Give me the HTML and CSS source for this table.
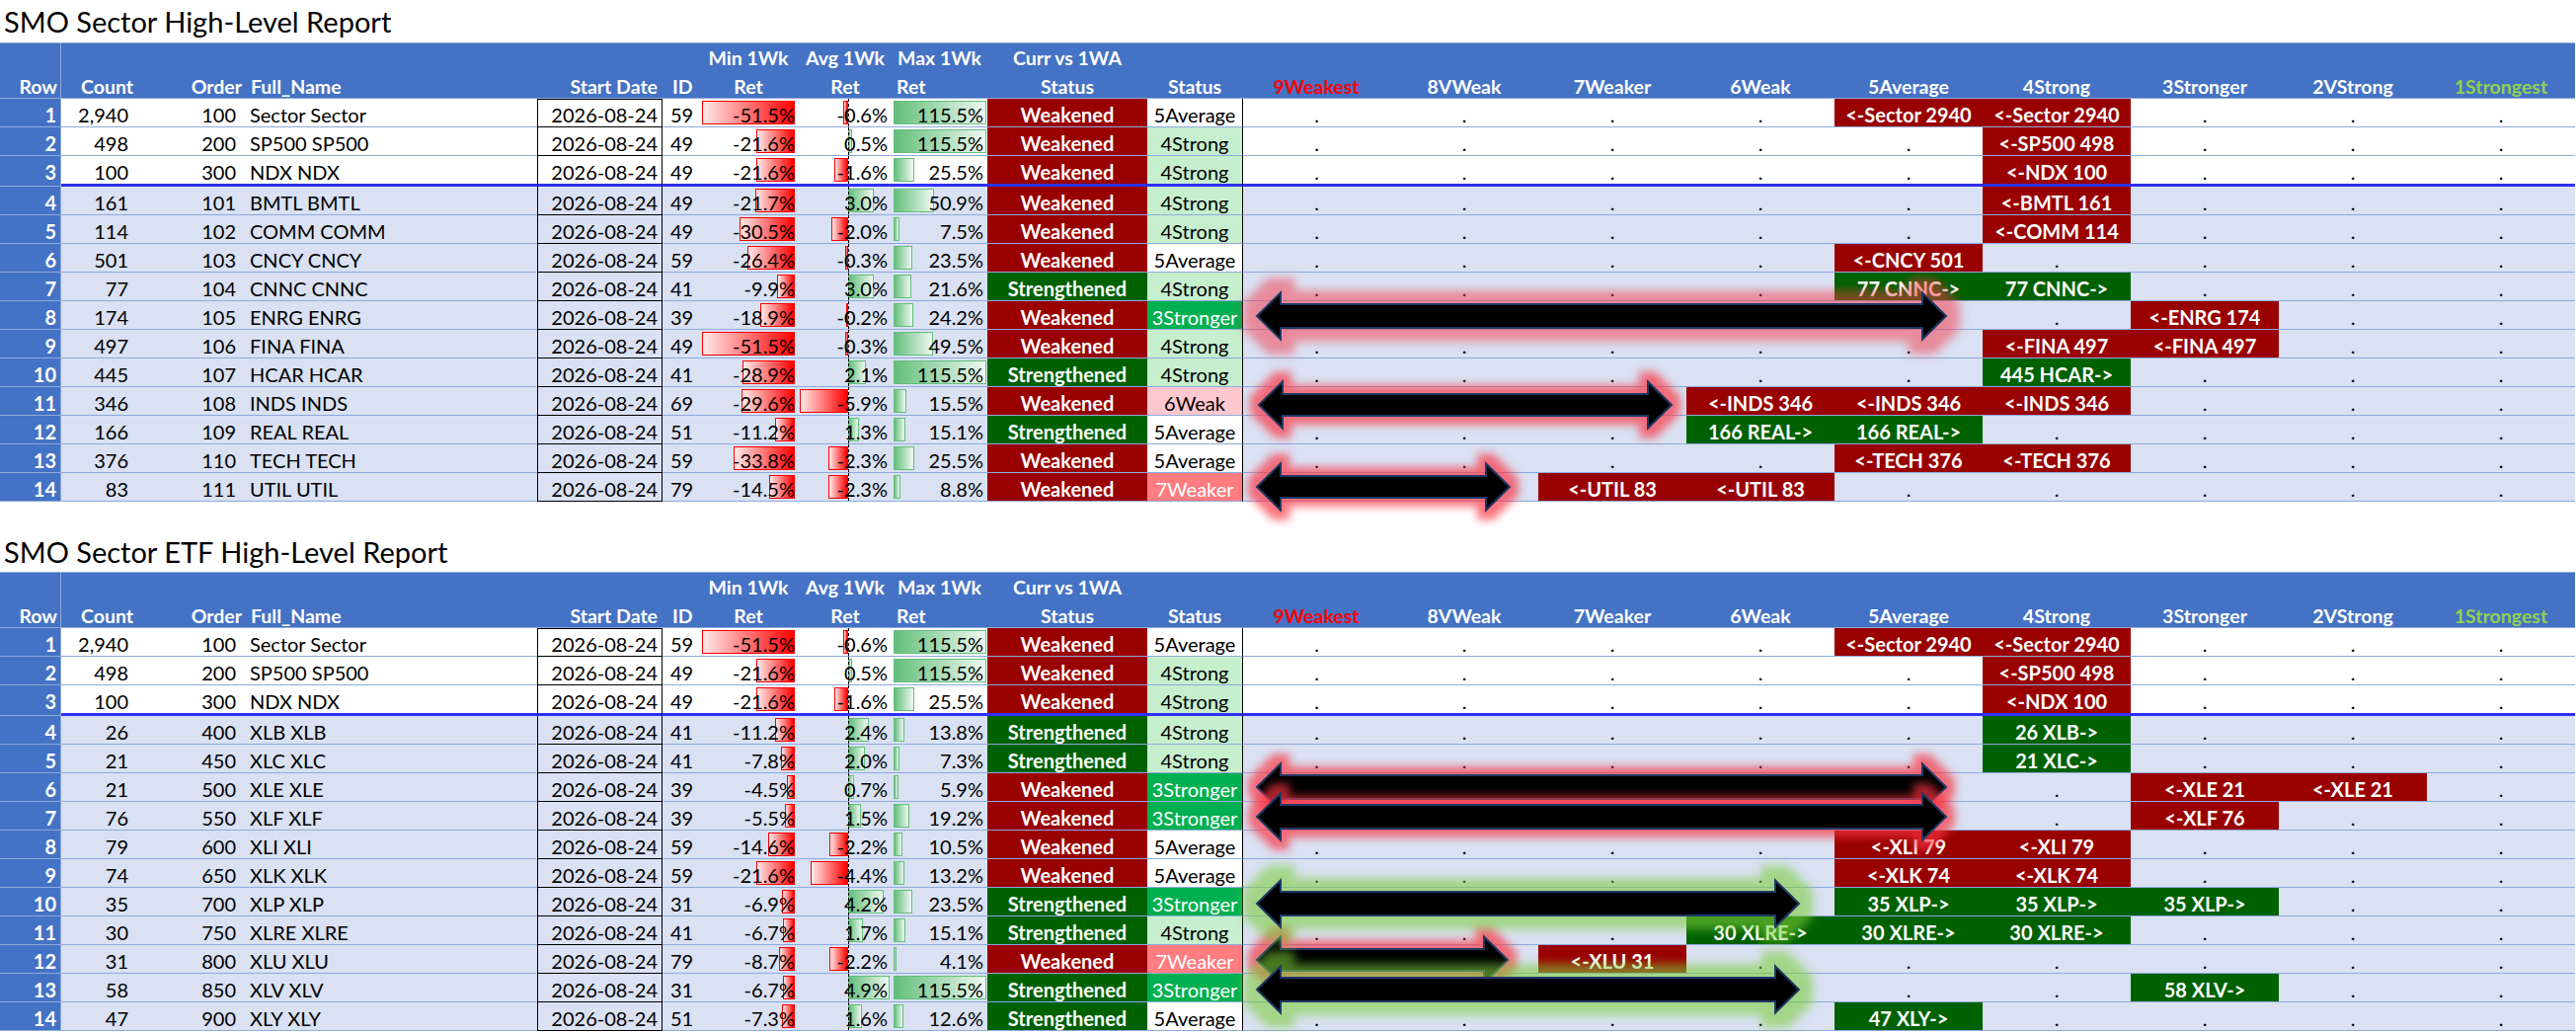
FILE: index.html
```html
<!DOCTYPE html>
<html>
<head>
<meta charset="utf-8">
<title>SMO Sector High-Level Report</title>
<link rel="stylesheet" href="styles.css">
</head>
<body>
<div class="title">SMO Sector High-Level Report</div>
<div class="tbl">
  <div class="head grid">
    <div class="rn hr"><span class="l1"></span><span class="l2">Row</span></div>
    <div class="hcnt"><span class="l1"></span><span class="l2">Count</span></div>
    <div class="hord"><span class="l1"></span><span class="l2">Order</span></div>
    <div class="hnm"><span class="l1"></span><span class="l2">Full_Name</span></div>
    <div class="hdt"><span class="l1"></span><span class="l2">Start Date</span></div>
    <div class="hid"><span class="l1"></span><span class="l2">ID</span></div>
    <div class="hc"><span class="l1">Min 1Wk</span><span class="l2">Ret</span></div>
    <div class="hc"><span class="l1">Avg 1Wk</span><span class="l2">Ret</span></div>
    <div class="hmx"><span class="l1">Max 1Wk</span><span class="l2">Ret</span></div>
    <div class="hc"><span class="l1">Curr vs 1WA</span><span class="l2">Status</span></div>
    <div class="hc"><span class="l1"></span><span class="l2">Status</span></div>
    <div class="hc"><span class="l1"></span><span class="l2 red">9Weakest</span></div>
    <div class="hc"><span class="l1"></span><span class="l2">8VWeak</span></div>
    <div class="hc"><span class="l1"></span><span class="l2">7Weaker</span></div>
    <div class="hc"><span class="l1"></span><span class="l2">6Weak</span></div>
    <div class="hc"><span class="l1"></span><span class="l2">5Average</span></div>
    <div class="hc"><span class="l1"></span><span class="l2">4Strong</span></div>
    <div class="hc"><span class="l1"></span><span class="l2">3Stronger</span></div>
    <div class="hc"><span class="l1"></span><span class="l2">2VStrong</span></div>
    <div class="hc"><span class="l1"></span><span class="l2 grn">1Strongest</span></div>
  </div>

  <div class="row grid w first"><div class="rn">1</div><div class="cnt">2,940</div><div class="ord">100</div><div class="nm">Sector Sector</div><div class="dt">2026-08-24</div><div class="id">59</div><div class="mn"><i class="bar n" style="width:94px"></i><span>-51.5%</span></div><div class="av"><i class="bar n" style="width:5px"></i><span>-0.6%</span></div><div class="mx"><i class="bar p" style="width:94px"></i><span>115.5%</span></div><div class="st wkd">Weakened</div><div class="s2 avg">5Average</div><div class="bk b9">.</div><div class="bk">.</div><div class="bk">.</div><div class="bk">.</div><div class="bk r">&lt;-Sector 2940</div><div class="bk r">&lt;-Sector 2940</div><div class="bk">.</div><div class="bk">.</div><div class="bk">.</div></div>
  <div class="row grid w"><div class="rn">2</div><div class="cnt">498</div><div class="ord">200</div><div class="nm">SP500 SP500</div><div class="dt">2026-08-24</div><div class="id">49</div><div class="mn"><i class="bar n" style="width:39px"></i><span>-21.6%</span></div><div class="av"><i class="bar p" style="width:4px"></i><span>0.5%</span></div><div class="mx"><i class="bar p" style="width:94px"></i><span>115.5%</span></div><div class="st wkd">Weakened</div><div class="s2 s4">4Strong</div><div class="bk b9">.</div><div class="bk">.</div><div class="bk">.</div><div class="bk">.</div><div class="bk">.</div><div class="bk r">&lt;-SP500 498</div><div class="bk">.</div><div class="bk">.</div><div class="bk">.</div></div>
  <div class="row grid w sep"><div class="rn">3</div><div class="cnt">100</div><div class="ord">300</div><div class="nm">NDX NDX</div><div class="dt">2026-08-24</div><div class="id">49</div><div class="mn"><i class="bar n" style="width:39px"></i><span>-21.6%</span></div><div class="av"><i class="bar n" style="width:14px"></i><span>-1.6%</span></div><div class="mx"><i class="bar p" style="width:21px"></i><span>25.5%</span></div><div class="st wkd">Weakened</div><div class="s2 s4">4Strong</div><div class="bk b9">.</div><div class="bk">.</div><div class="bk">.</div><div class="bk">.</div><div class="bk">.</div><div class="bk r">&lt;-NDX 100</div><div class="bk">.</div><div class="bk">.</div><div class="bk">.</div></div>
  <div class="row grid b"><div class="rn">4</div><div class="cnt">161</div><div class="ord">101</div><div class="nm">BMTL BMTL</div><div class="dt">2026-08-24</div><div class="id">49</div><div class="mn"><i class="bar n" style="width:40px"></i><span>-21.7%</span></div><div class="av"><i class="bar p" style="width:26px"></i><span>3.0%</span></div><div class="mx"><i class="bar p" style="width:41px"></i><span>50.9%</span></div><div class="st wkd">Weakened</div><div class="s2 s4">4Strong</div><div class="bk b9">.</div><div class="bk">.</div><div class="bk">.</div><div class="bk">.</div><div class="bk">.</div><div class="bk r">&lt;-BMTL 161</div><div class="bk">.</div><div class="bk">.</div><div class="bk">.</div></div>
  <div class="row grid b"><div class="rn">5</div><div class="cnt">114</div><div class="ord">102</div><div class="nm">COMM COMM</div><div class="dt">2026-08-24</div><div class="id">49</div><div class="mn"><i class="bar n" style="width:56px"></i><span>-30.5%</span></div><div class="av"><i class="bar n" style="width:17px"></i><span>-2.0%</span></div><div class="mx"><i class="bar p" style="width:6px"></i><span>7.5%</span></div><div class="st wkd">Weakened</div><div class="s2 s4">4Strong</div><div class="bk b9">.</div><div class="bk">.</div><div class="bk">.</div><div class="bk">.</div><div class="bk">.</div><div class="bk r">&lt;-COMM 114</div><div class="bk">.</div><div class="bk">.</div><div class="bk">.</div></div>
  <div class="row grid b"><div class="rn">6</div><div class="cnt">501</div><div class="ord">103</div><div class="nm">CNCY CNCY</div><div class="dt">2026-08-24</div><div class="id">59</div><div class="mn"><i class="bar n" style="width:48px"></i><span>-26.4%</span></div><div class="av"><i class="bar n" style="width:3px"></i><span>-0.3%</span></div><div class="mx"><i class="bar p" style="width:19px"></i><span>23.5%</span></div><div class="st wkd">Weakened</div><div class="s2 avg">5Average</div><div class="bk b9">.</div><div class="bk">.</div><div class="bk">.</div><div class="bk">.</div><div class="bk r">&lt;-CNCY 501</div><div class="bk">.</div><div class="bk">.</div><div class="bk">.</div><div class="bk">.</div></div>
  <div class="row grid b"><div class="rn">7</div><div class="cnt">77</div><div class="ord">104</div><div class="nm">CNNC CNNC</div><div class="dt">2026-08-24</div><div class="id">41</div><div class="mn"><i class="bar n" style="width:18px"></i><span>-9.9%</span></div><div class="av"><i class="bar p" style="width:26px"></i><span>3.0%</span></div><div class="mx"><i class="bar p" style="width:18px"></i><span>21.6%</span></div><div class="st stg">Strengthened</div><div class="s2 s4">4Strong</div><div class="bk b9">.</div><div class="bk">.</div><div class="bk">.</div><div class="bk">.</div><div class="bk g">77 CNNC-&gt;</div><div class="bk g">77 CNNC-&gt;</div><div class="bk">.</div><div class="bk">.</div><div class="bk">.</div></div>
  <div class="row grid b"><div class="rn">8</div><div class="cnt">174</div><div class="ord">105</div><div class="nm">ENRG ENRG</div><div class="dt">2026-08-24</div><div class="id">39</div><div class="mn"><i class="bar n" style="width:35px"></i><span>-18.9%</span></div><div class="av"><i class="bar n" style="width:2px"></i><span>-0.2%</span></div><div class="mx"><i class="bar p" style="width:20px"></i><span>24.2%</span></div><div class="st wkd">Weakened</div><div class="s2 s3">3Stronger</div><div class="bk b9">.</div><div class="bk">.</div><div class="bk">.</div><div class="bk">.</div><div class="bk">.</div><div class="bk">.</div><div class="bk r">&lt;-ENRG 174</div><div class="bk">.</div><div class="bk">.</div></div>
  <div class="row grid b"><div class="rn">9</div><div class="cnt">497</div><div class="ord">106</div><div class="nm">FINA FINA</div><div class="dt">2026-08-24</div><div class="id">49</div><div class="mn"><i class="bar n" style="width:94px"></i><span>-51.5%</span></div><div class="av"><i class="bar n" style="width:3px"></i><span>-0.3%</span></div><div class="mx"><i class="bar p" style="width:40px"></i><span>49.5%</span></div><div class="st wkd">Weakened</div><div class="s2 s4">4Strong</div><div class="bk b9">.</div><div class="bk">.</div><div class="bk">.</div><div class="bk">.</div><div class="bk">.</div><div class="bk r">&lt;-FINA 497</div><div class="bk r">&lt;-FINA 497</div><div class="bk">.</div><div class="bk">.</div></div>
  <div class="row grid b"><div class="rn">10</div><div class="cnt">445</div><div class="ord">107</div><div class="nm">HCAR HCAR</div><div class="dt">2026-08-24</div><div class="id">41</div><div class="mn"><i class="bar n" style="width:53px"></i><span>-28.9%</span></div><div class="av"><i class="bar p" style="width:18px"></i><span>2.1%</span></div><div class="mx"><i class="bar p" style="width:94px"></i><span>115.5%</span></div><div class="st stg">Strengthened</div><div class="s2 s4">4Strong</div><div class="bk b9">.</div><div class="bk">.</div><div class="bk">.</div><div class="bk">.</div><div class="bk">.</div><div class="bk g">445 HCAR-&gt;</div><div class="bk">.</div><div class="bk">.</div><div class="bk">.</div></div>
  <div class="row grid b"><div class="rn">11</div><div class="cnt">346</div><div class="ord">108</div><div class="nm">INDS INDS</div><div class="dt">2026-08-24</div><div class="id">69</div><div class="mn"><i class="bar n" style="width:54px"></i><span>-29.6%</span></div><div class="av"><i class="bar n" style="width:49px"></i><span>-5.9%</span></div><div class="mx"><i class="bar p" style="width:13px"></i><span>15.5%</span></div><div class="st wkd">Weakened</div><div class="s2 s6">6Weak</div><div class="bk b9">.</div><div class="bk">.</div><div class="bk">.</div><div class="bk r">&lt;-INDS 346</div><div class="bk r">&lt;-INDS 346</div><div class="bk r">&lt;-INDS 346</div><div class="bk">.</div><div class="bk">.</div><div class="bk">.</div></div>
  <div class="row grid b"><div class="rn">12</div><div class="cnt">166</div><div class="ord">109</div><div class="nm">REAL REAL</div><div class="dt">2026-08-24</div><div class="id">51</div><div class="mn"><i class="bar n" style="width:20px"></i><span>-11.2%</span></div><div class="av"><i class="bar p" style="width:11px"></i><span>1.3%</span></div><div class="mx"><i class="bar p" style="width:12px"></i><span>15.1%</span></div><div class="st stg">Strengthened</div><div class="s2 avg">5Average</div><div class="bk b9">.</div><div class="bk">.</div><div class="bk">.</div><div class="bk g">166 REAL-&gt;</div><div class="bk g">166 REAL-&gt;</div><div class="bk">.</div><div class="bk">.</div><div class="bk">.</div><div class="bk">.</div></div>
  <div class="row grid b"><div class="rn">13</div><div class="cnt">376</div><div class="ord">110</div><div class="nm">TECH TECH</div><div class="dt">2026-08-24</div><div class="id">59</div><div class="mn"><i class="bar n" style="width:62px"></i><span>-33.8%</span></div><div class="av"><i class="bar n" style="width:20px"></i><span>-2.3%</span></div><div class="mx"><i class="bar p" style="width:21px"></i><span>25.5%</span></div><div class="st wkd">Weakened</div><div class="s2 avg">5Average</div><div class="bk b9">.</div><div class="bk">.</div><div class="bk">.</div><div class="bk">.</div><div class="bk r">&lt;-TECH 376</div><div class="bk r">&lt;-TECH 376</div><div class="bk">.</div><div class="bk">.</div><div class="bk">.</div></div>
  <div class="row grid b"><div class="rn">14</div><div class="cnt">83</div><div class="ord">111</div><div class="nm">UTIL UTIL</div><div class="dt">2026-08-24</div><div class="id">79</div><div class="mn"><i class="bar n" style="width:26px"></i><span>-14.5%</span></div><div class="av"><i class="bar n" style="width:20px"></i><span>-2.3%</span></div><div class="mx"><i class="bar p" style="width:7px"></i><span>8.8%</span></div><div class="st wkd">Weakened</div><div class="s2 s7">7Weaker</div><div class="bk b9">.</div><div class="bk">.</div><div class="bk r">&lt;-UTIL 83</div><div class="bk r">&lt;-UTIL 83</div><div class="bk">.</div><div class="bk">.</div><div class="bk">.</div><div class="bk">.</div><div class="bk">.</div></div>

  <svg class="arrows" width="2608" height="520" viewBox="0 0 2608 520">
    <defs>
      <filter id="glowBig1" filterUnits="userSpaceOnUse" x="1200" y="0" width="900" height="520" color-interpolation-filters="sRGB">
        <feMorphology in="SourceAlpha" operator="dilate" radius="13" result="d"/>
        <feGaussianBlur in="d" stdDeviation="5" result="b"/>
        <feFlood flood-color="#F53545" flood-opacity="0.5"/>
        <feComposite in2="b" operator="in" result="g"/>
        <feMerge><feMergeNode in="g"/><feMergeNode in="SourceGraphic"/></feMerge>
      </filter>
      <filter id="glowR1" filterUnits="userSpaceOnUse" x="1200" y="0" width="900" height="520" color-interpolation-filters="sRGB">
        <feMorphology in="SourceAlpha" operator="dilate" radius="8" result="d"/>
        <feGaussianBlur in="d" stdDeviation="4" result="b"/>
        <feFlood flood-color="#FA3340" flood-opacity="0.68"/>
        <feComposite in2="b" operator="in" result="g"/>
        <feMerge><feMergeNode in="g"/><feMergeNode in="SourceGraphic"/></feMerge>
      </filter>
    </defs>
    <g class="arrow" filter="url(#glowBig1)"><polygon points="1273,277 1297,253.5 1297,265 1947,265 1947,253.5 1971,277 1947,300.5 1947,289 1297,289 1297,300.5"/></g>
    <g class="arrow" filter="url(#glowR1)"><polygon points="1275,367 1299,343.5 1299,356 1669,356 1669,343.5 1693,367 1669,390.5 1669,378 1299,378 1299,390.5"/></g>
    <g class="arrow" filter="url(#glowR1)"><polygon points="1273,450 1297,426.5 1297,439 1505,439 1505,426.5 1529,450 1505,473.5 1505,461 1297,461 1297,473.5"/></g>
  </svg>
</div>

<div class="title second">SMO Sector ETF High-Level Report</div>
<div class="tbl">
  <div class="head grid">
    <div class="rn hr"><span class="l1"></span><span class="l2">Row</span></div>
    <div class="hcnt"><span class="l1"></span><span class="l2">Count</span></div>
    <div class="hord"><span class="l1"></span><span class="l2">Order</span></div>
    <div class="hnm"><span class="l1"></span><span class="l2">Full_Name</span></div>
    <div class="hdt"><span class="l1"></span><span class="l2">Start Date</span></div>
    <div class="hid"><span class="l1"></span><span class="l2">ID</span></div>
    <div class="hc"><span class="l1">Min 1Wk</span><span class="l2">Ret</span></div>
    <div class="hc"><span class="l1">Avg 1Wk</span><span class="l2">Ret</span></div>
    <div class="hmx"><span class="l1">Max 1Wk</span><span class="l2">Ret</span></div>
    <div class="hc"><span class="l1">Curr vs 1WA</span><span class="l2">Status</span></div>
    <div class="hc"><span class="l1"></span><span class="l2">Status</span></div>
    <div class="hc"><span class="l1"></span><span class="l2 red">9Weakest</span></div>
    <div class="hc"><span class="l1"></span><span class="l2">8VWeak</span></div>
    <div class="hc"><span class="l1"></span><span class="l2">7Weaker</span></div>
    <div class="hc"><span class="l1"></span><span class="l2">6Weak</span></div>
    <div class="hc"><span class="l1"></span><span class="l2">5Average</span></div>
    <div class="hc"><span class="l1"></span><span class="l2">4Strong</span></div>
    <div class="hc"><span class="l1"></span><span class="l2">3Stronger</span></div>
    <div class="hc"><span class="l1"></span><span class="l2">2VStrong</span></div>
    <div class="hc"><span class="l1"></span><span class="l2 grn">1Strongest</span></div>
  </div>

  <div class="row grid w first"><div class="rn">1</div><div class="cnt">2,940</div><div class="ord">100</div><div class="nm">Sector Sector</div><div class="dt">2026-08-24</div><div class="id">59</div><div class="mn"><i class="bar n" style="width:94px"></i><span>-51.5%</span></div><div class="av"><i class="bar n" style="width:5px"></i><span>-0.6%</span></div><div class="mx"><i class="bar p" style="width:94px"></i><span>115.5%</span></div><div class="st wkd">Weakened</div><div class="s2 avg">5Average</div><div class="bk b9">.</div><div class="bk">.</div><div class="bk">.</div><div class="bk">.</div><div class="bk r">&lt;-Sector 2940</div><div class="bk r">&lt;-Sector 2940</div><div class="bk">.</div><div class="bk">.</div><div class="bk">.</div></div>
  <div class="row grid w"><div class="rn">2</div><div class="cnt">498</div><div class="ord">200</div><div class="nm">SP500 SP500</div><div class="dt">2026-08-24</div><div class="id">49</div><div class="mn"><i class="bar n" style="width:39px"></i><span>-21.6%</span></div><div class="av"><i class="bar p" style="width:4px"></i><span>0.5%</span></div><div class="mx"><i class="bar p" style="width:94px"></i><span>115.5%</span></div><div class="st wkd">Weakened</div><div class="s2 s4">4Strong</div><div class="bk b9">.</div><div class="bk">.</div><div class="bk">.</div><div class="bk">.</div><div class="bk">.</div><div class="bk r">&lt;-SP500 498</div><div class="bk">.</div><div class="bk">.</div><div class="bk">.</div></div>
  <div class="row grid w sep"><div class="rn">3</div><div class="cnt">100</div><div class="ord">300</div><div class="nm">NDX NDX</div><div class="dt">2026-08-24</div><div class="id">49</div><div class="mn"><i class="bar n" style="width:39px"></i><span>-21.6%</span></div><div class="av"><i class="bar n" style="width:14px"></i><span>-1.6%</span></div><div class="mx"><i class="bar p" style="width:21px"></i><span>25.5%</span></div><div class="st wkd">Weakened</div><div class="s2 s4">4Strong</div><div class="bk b9">.</div><div class="bk">.</div><div class="bk">.</div><div class="bk">.</div><div class="bk">.</div><div class="bk r">&lt;-NDX 100</div><div class="bk">.</div><div class="bk">.</div><div class="bk">.</div></div>
  <div class="row grid b"><div class="rn">4</div><div class="cnt">26</div><div class="ord">400</div><div class="nm">XLB XLB</div><div class="dt">2026-08-24</div><div class="id">41</div><div class="mn"><i class="bar n" style="width:20px"></i><span>-11.2%</span></div><div class="av"><i class="bar p" style="width:21px"></i><span>2.4%</span></div><div class="mx"><i class="bar p" style="width:11px"></i><span>13.8%</span></div><div class="st stg">Strengthened</div><div class="s2 s4">4Strong</div><div class="bk b9">.</div><div class="bk">.</div><div class="bk">.</div><div class="bk">.</div><div class="bk">.</div><div class="bk g">26 XLB-&gt;</div><div class="bk">.</div><div class="bk">.</div><div class="bk">.</div></div>
  <div class="row grid b"><div class="rn">5</div><div class="cnt">21</div><div class="ord">450</div><div class="nm">XLC XLC</div><div class="dt">2026-08-24</div><div class="id">41</div><div class="mn"><i class="bar n" style="width:14px"></i><span>-7.8%</span></div><div class="av"><i class="bar p" style="width:17px"></i><span>2.0%</span></div><div class="mx"><i class="bar p" style="width:6px"></i><span>7.3%</span></div><div class="st stg">Strengthened</div><div class="s2 s4">4Strong</div><div class="bk b9">.</div><div class="bk">.</div><div class="bk">.</div><div class="bk">.</div><div class="bk">.</div><div class="bk g">21 XLC-&gt;</div><div class="bk">.</div><div class="bk">.</div><div class="bk">.</div></div>
  <div class="row grid b"><div class="rn">6</div><div class="cnt">21</div><div class="ord">500</div><div class="nm">XLE XLE</div><div class="dt">2026-08-24</div><div class="id">39</div><div class="mn"><i class="bar n" style="width:8px"></i><span>-4.5%</span></div><div class="av"><i class="bar p" style="width:6px"></i><span>0.7%</span></div><div class="mx"><i class="bar p" style="width:5px"></i><span>5.9%</span></div><div class="st wkd">Weakened</div><div class="s2 s3">3Stronger</div><div class="bk b9">.</div><div class="bk">.</div><div class="bk">.</div><div class="bk">.</div><div class="bk">.</div><div class="bk">.</div><div class="bk r">&lt;-XLE 21</div><div class="bk r">&lt;-XLE 21</div><div class="bk">.</div></div>
  <div class="row grid b"><div class="rn">7</div><div class="cnt">76</div><div class="ord">550</div><div class="nm">XLF XLF</div><div class="dt">2026-08-24</div><div class="id">39</div><div class="mn"><i class="bar n" style="width:10px"></i><span>-5.5%</span></div><div class="av"><i class="bar p" style="width:13px"></i><span>1.5%</span></div><div class="mx"><i class="bar p" style="width:16px"></i><span>19.2%</span></div><div class="st wkd">Weakened</div><div class="s2 s3">3Stronger</div><div class="bk b9">.</div><div class="bk">.</div><div class="bk">.</div><div class="bk">.</div><div class="bk">.</div><div class="bk">.</div><div class="bk r">&lt;-XLF 76</div><div class="bk">.</div><div class="bk">.</div></div>
  <div class="row grid b"><div class="rn">8</div><div class="cnt">79</div><div class="ord">600</div><div class="nm">XLI XLI</div><div class="dt">2026-08-24</div><div class="id">59</div><div class="mn"><i class="bar n" style="width:27px"></i><span>-14.6%</span></div><div class="av"><i class="bar n" style="width:19px"></i><span>-2.2%</span></div><div class="mx"><i class="bar p" style="width:9px"></i><span>10.5%</span></div><div class="st wkd">Weakened</div><div class="s2 avg">5Average</div><div class="bk b9">.</div><div class="bk">.</div><div class="bk">.</div><div class="bk">.</div><div class="bk r">&lt;-XLI 79</div><div class="bk r">&lt;-XLI 79</div><div class="bk">.</div><div class="bk">.</div><div class="bk">.</div></div>
  <div class="row grid b"><div class="rn">9</div><div class="cnt">74</div><div class="ord">650</div><div class="nm">XLK XLK</div><div class="dt">2026-08-24</div><div class="id">59</div><div class="mn"><i class="bar n" style="width:39px"></i><span>-21.6%</span></div><div class="av"><i class="bar n" style="width:38px"></i><span>-4.4%</span></div><div class="mx"><i class="bar p" style="width:11px"></i><span>13.2%</span></div><div class="st wkd">Weakened</div><div class="s2 avg">5Average</div><div class="bk b9">.</div><div class="bk">.</div><div class="bk">.</div><div class="bk">.</div><div class="bk r">&lt;-XLK 74</div><div class="bk r">&lt;-XLK 74</div><div class="bk">.</div><div class="bk">.</div><div class="bk">.</div></div>
  <div class="row grid b"><div class="rn">10</div><div class="cnt">35</div><div class="ord">700</div><div class="nm">XLP XLP</div><div class="dt">2026-08-24</div><div class="id">31</div><div class="mn"><i class="bar n" style="width:13px"></i><span>-6.9%</span></div><div class="av"><i class="bar p" style="width:36px"></i><span>4.2%</span></div><div class="mx"><i class="bar p" style="width:19px"></i><span>23.5%</span></div><div class="st stg">Strengthened</div><div class="s2 s3">3Stronger</div><div class="bk b9">.</div><div class="bk">.</div><div class="bk">.</div><div class="bk">.</div><div class="bk g">35 XLP-&gt;</div><div class="bk g">35 XLP-&gt;</div><div class="bk g">35 XLP-&gt;</div><div class="bk">.</div><div class="bk">.</div></div>
  <div class="row grid b"><div class="rn">11</div><div class="cnt">30</div><div class="ord">750</div><div class="nm">XLRE XLRE</div><div class="dt">2026-08-24</div><div class="id">41</div><div class="mn"><i class="bar n" style="width:12px"></i><span>-6.7%</span></div><div class="av"><i class="bar p" style="width:15px"></i><span>1.7%</span></div><div class="mx"><i class="bar p" style="width:12px"></i><span>15.1%</span></div><div class="st stg">Strengthened</div><div class="s2 s4">4Strong</div><div class="bk b9">.</div><div class="bk">.</div><div class="bk">.</div><div class="bk g">30 XLRE-&gt;</div><div class="bk g">30 XLRE-&gt;</div><div class="bk g">30 XLRE-&gt;</div><div class="bk">.</div><div class="bk">.</div><div class="bk">.</div></div>
  <div class="row grid b"><div class="rn">12</div><div class="cnt">31</div><div class="ord">800</div><div class="nm">XLU XLU</div><div class="dt">2026-08-24</div><div class="id">79</div><div class="mn"><i class="bar n" style="width:16px"></i><span>-8.7%</span></div><div class="av"><i class="bar n" style="width:19px"></i><span>-2.2%</span></div><div class="mx"><i class="bar p" style="width:3px"></i><span>4.1%</span></div><div class="st wkd">Weakened</div><div class="s2 s7">7Weaker</div><div class="bk b9">.</div><div class="bk">.</div><div class="bk r">&lt;-XLU 31</div><div class="bk">.</div><div class="bk">.</div><div class="bk">.</div><div class="bk">.</div><div class="bk">.</div><div class="bk">.</div></div>
  <div class="row grid b"><div class="rn">13</div><div class="cnt">58</div><div class="ord">850</div><div class="nm">XLV XLV</div><div class="dt">2026-08-24</div><div class="id">31</div><div class="mn"><i class="bar n" style="width:12px"></i><span>-6.7%</span></div><div class="av"><i class="bar p" style="width:42px"></i><span>4.9%</span></div><div class="mx"><i class="bar p" style="width:94px"></i><span>115.5%</span></div><div class="st stg">Strengthened</div><div class="s2 s3">3Stronger</div><div class="bk b9">.</div><div class="bk">.</div><div class="bk">.</div><div class="bk">.</div><div class="bk">.</div><div class="bk">.</div><div class="bk g">58 XLV-&gt;</div><div class="bk">.</div><div class="bk">.</div></div>
  <div class="row grid b"><div class="rn">14</div><div class="cnt">47</div><div class="ord">900</div><div class="nm">XLY XLY</div><div class="dt">2026-08-24</div><div class="id">51</div><div class="mn"><i class="bar n" style="width:13px"></i><span>-7.3%</span></div><div class="av"><i class="bar p" style="width:14px"></i><span>1.6%</span></div><div class="mx"><i class="bar p" style="width:10px"></i><span>12.6%</span></div><div class="st stg">Strengthened</div><div class="s2 avg">5Average</div><div class="bk b9">.</div><div class="bk">.</div><div class="bk">.</div><div class="bk">.</div><div class="bk g">47 XLY-&gt;</div><div class="bk">.</div><div class="bk">.</div><div class="bk">.</div><div class="bk">.</div></div>

  <svg class="arrows last" width="2608" height="466" viewBox="0 0 2608 466">
    <defs>
      <filter id="glowR2" filterUnits="userSpaceOnUse" x="1200" y="0" width="900" height="466" color-interpolation-filters="sRGB">
        <feMorphology in="SourceAlpha" operator="dilate" radius="8" result="d"/>
        <feGaussianBlur in="d" stdDeviation="4" result="b"/>
        <feFlood flood-color="#FA3340" flood-opacity="0.68"/>
        <feComposite in2="b" operator="in" result="g"/>
        <feMerge><feMergeNode in="g"/><feMergeNode in="SourceGraphic"/></feMerge>
      </filter>
      <filter id="glowG2" filterUnits="userSpaceOnUse" x="1200" y="0" width="900" height="466" color-interpolation-filters="sRGB">
        <feMorphology in="SourceAlpha" operator="dilate" radius="13" result="d"/>
        <feGaussianBlur in="d" stdDeviation="5" result="b"/>
        <feFlood flood-color="#7CCE3A" flood-opacity="0.58"/>
        <feComposite in2="b" operator="in" result="g"/>
        <feMerge><feMergeNode in="g"/><feMergeNode in="SourceGraphic"/></feMerge>
      </filter>
    </defs>
    <g class="arrow" filter="url(#glowR2)"><polygon points="1273,393 1297,369.5 1297,382 1503,382 1503,369.5 1527,393 1503,416.5 1503,404 1297,404 1297,416.5"/></g>
    <g class="arrow" filter="url(#glowR2)"><polygon points="1273,218 1297,194.5 1297,206 1947,206 1947,194.5 1971,218 1947,241.5 1947,230 1297,230 1297,241.5"/></g>
    <g class="arrow" filter="url(#glowR2)"><polygon points="1273,248 1297,224.5 1297,236 1947,236 1947,224.5 1971,248 1947,271.5 1947,260 1297,260 1297,271.5"/></g>
    <g class="arrow" filter="url(#glowG2)"><polygon points="1273,336 1297,312.5 1297,324 1798,324 1798,312.5 1822,336 1798,359.5 1798,348 1297,348 1297,359.5"/></g>
    <g class="arrow" filter="url(#glowG2)"><polygon points="1273,423 1297,399.5 1297,411 1798,411 1798,399.5 1822,423 1798,446.5 1798,435 1297,435 1297,446.5"/></g>
  </svg>
</div>
</body>
</html>
```
FILE: styles.css
```css
* { box-sizing: border-box; }

html, body { height: 1046px; overflow: hidden; }

body {
  margin: 0;
  width: 2609px;
  background: #fff;
  color: #000;
  font-family: Lato, Roboto, "Liberation Sans", sans-serif;
  font-size: 20px;
}

.title {
  height: 43px;
  padding: 4px 0 0 4px;
  font-size: 29px;
  line-height: 35px;
  white-space: nowrap;
}
.title.second {
  height: 71px;
  padding-top: 33px;
}

.tbl {
  position: relative;
  width: 2608px;
}

.grid {
  display: grid;
  grid-template-columns: 62px 78px 105px 299px 127px 36px 102px 94px 97px 162px 96px repeat(9, 150px);
}

/* header */
.head {
  height: 57px;
  background: #4472C4;
  color: #fff;
  font-weight: bold;
  font-size: 19.5px;
  border-top: 1px solid #8EA9DB;
  border-bottom: 1px solid #8EA9DB;
}
.head > div { white-space: nowrap; }
.l1 { display: block; height: 29px; line-height: 29px; }
.l2 { display: block; height: 26px; line-height: 29px; }
.head .hr { text-align: right; padding-right: 3px; border-right: 1px solid #8EA9DB; }
.hcnt { padding-left: 20px; }
.hord { text-align: right; padding-right: 0; }
.hnm { padding-left: 9px; }
.hdt { text-align: right; padding-right: 5px; }
.hid { padding-left: 10px; }
.hc { text-align: center; }
.hmx .l1 { text-align: center; }
.hmx .l2 { padding-left: 5px; }
.red { color: #FF0000; }
.grn { color: #92D050; }

/* data rows */
.row { height: 29px; }
.row.sep { height: 31px; }
.row.w { background: #fff; }
.row.b { background: #D9E1F2; }

.row > div {
  height: 100%;
  border-bottom: 1px solid #8EA9DB;
  padding-top: 4px;
  line-height: 24px;
  white-space: nowrap;
  overflow: hidden;
}
.row.sep > div:not(.rn) { border-bottom: 3px solid #3030FF; }

.rn {
  background: #4472C4;
  color: #fff;
  font-weight: bold;
  text-align: right;
  padding-right: 4px;
  border-right: 1px solid #8EA9DB;
}
.cnt { text-align: right; padding-right: 10px; }
.ord { text-align: right; padding-right: 6px; }
.nm { padding-left: 8px; }
.row .dt {
  text-align: right;
  padding-right: 4px;
  border-left: 1px solid #000;
  border-right: 1px solid #000;
  border-bottom-color: #000;
}
.row.first .dt { box-shadow: inset 0 1px 0 #000; }
.id { padding-left: 8px; }

.mn, .av, .mx {
  position: relative;
  text-align: right;
  padding-right: 4px;
}
.mn span, .av span, .mx span { position: relative; z-index: 1; }

.bar {
  position: absolute;
  top: 2px;
  height: 24px;
  border: 1px solid;
}
.bar.n { background: linear-gradient(to right, #FFE9E9, #FF0000); border-color: #FF0000; }
.bar.p { background: linear-gradient(to right, #63BE7B, #EEF8F1); border-color: #63BE7B; }
.mn .bar { right: 4px; }
.mx .bar { left: 2px; }
.av .bar.n { right: 44px; }
.av .bar.p { left: 50px; }
.av::before {
  content: "";
  position: absolute;
  left: 50px;
  top: 0;
  bottom: 0;
  border-left: 1px dashed #000;
  z-index: 2;
}

.st { text-align: center; color: #fff; font-weight: bold; }
.wkd { background: #990000; }
.stg { background: #006100; }

.s2 { text-align: center; }
.avg { background: #fff; }
.s4 { background: #C6EFCE; }
.s3 { background: #00B050; color: #fff; }
.s6 { background: #FFC7CE; }
.s7 { background: #FF7C80; color: #fff; }

.bk { text-align: center; }
.bk.r { background: #990000; color: #fff; font-weight: bold; }
.bk.g { background: #006100; color: #fff; font-weight: bold; }
.row .b9 { border-left: 1px solid #000; }

/* arrow overlay */
.arrows {
  position: absolute;
  left: 0;
  top: 0;
  overflow: visible;
  pointer-events: none;
  z-index: 5;
}
.arrows.last { overflow: hidden; }
.arrow polygon {
  fill: #000;
  stroke: #1F3864;
  stroke-width: 2;
  stroke-linejoin: miter;
}
```
